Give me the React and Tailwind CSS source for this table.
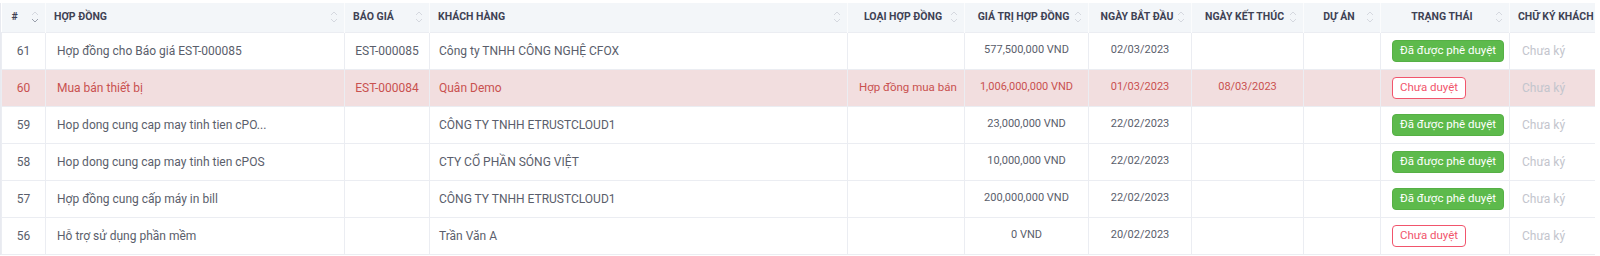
const COLS = [
  { key: 'no', label: '#', w: 44, head: 'left' },
  { key: 'name', label: 'Hợp đồng', w: 299, head: 'left' },
  { key: 'quote', label: 'Báo giá', w: 85, head: 'left' },
  { key: 'client', label: 'Khách hàng', w: 418, head: 'left' },
  { key: 'type', label: 'Loại hợp đồng', w: 117, head: 'center' },
  { key: 'value', label: 'Giá trị hợp đồng', w: 124, head: 'center' },
  { key: 'start', label: 'Ngày bắt đầu', w: 103, head: 'center' },
  { key: 'end', label: 'Ngày kết thúc', w: 112, head: 'center' },
  { key: 'project', label: 'Dự án', w: 77, head: 'center' },
  { key: 'status', label: 'Trạng thái', w: 129, head: 'center' },
  { key: 'sign', label: 'Chữ ký khách hàng', w: 130, head: 'left', noSort: true },
]

const ROWS = [
  { no: 61, name: 'Hợp đồng cho Báo giá EST-000085', quote: 'EST-000085', client: 'Công ty TNHH CÔNG NGHỆ CFOX', type: '', value: '577,500,000 VND', start: '02/03/2023', end: '', approved: true },
  { no: 60, name: 'Mua bán thiết bị', quote: 'EST-000084', client: 'Quân Demo', type: 'Hợp đồng mua bán', value: '1,006,000,000 VND', start: '01/03/2023', end: '08/03/2023', approved: false, danger: true },
  { no: 59, name: 'Hop dong cung cap may tinh tien cPO...', quote: '', client: 'CÔNG TY TNHH ETRUSTCLOUD1', type: '', value: '23,000,000 VND', start: '22/02/2023', end: '', approved: true },
  { no: 58, name: 'Hop dong cung cap may tinh tien cPOS', quote: '', client: 'CTY CỔ PHẦN SÓNG VIỆT', type: '', value: '10,000,000 VND', start: '22/02/2023', end: '', approved: true },
  { no: 57, name: 'Hợp đồng cung cấp máy in bill', quote: '', client: 'CÔNG TY TNHH ETRUSTCLOUD1', type: '', value: '200,000,000 VND', start: '22/02/2023', end: '', approved: true },
  { no: 56, name: 'Hỗ trợ sử dụng phần mềm', quote: '', client: 'Trần Văn A', type: '', value: '0 VND', start: '20/02/2023', end: '', approved: false },
]

function SortIcon({ active }) {
  return (
    <svg width="8" height="16" viewBox="0 0 8 16" fill="none" className="shrink-0">
      <path d="M1 6 L4 3 L7 6" stroke="#d5d8df" strokeWidth="1" />
      <path d="M1 10 L4 13 L7 10" stroke={active ? '#9aa0ac' : '#d5d8df'} strokeWidth="1" />
    </svg>
  )
}

function StatusBadge({ approved }) {
  if (approved) {
    return (
      <span className="inline-flex items-center h-[22px] px-[7px] rounded-[4px] bg-[#5dba4c] border border-[#56b045] text-white text-[11.5px]">
        Đã được phê duyệt
      </span>
    )
  }
  return (
    <span className="inline-flex items-center h-[22px] px-[7px] rounded-[4px] bg-white border border-[#f1556c] text-[#f1556c] text-[11.5px]">
      Chưa duyệt
    </span>
  )
}

export default function App() {
  return (
    <div className="bg-white w-[1600px] h-[256px] pt-[3px] font-['Roboto',sans-serif]">
      <div className="w-[1595px] overflow-hidden border-l border-[#e8eaf0]">
        <table className="table-fixed border-collapse w-[1638px]">
          <colgroup>
            {COLS.map(c => <col key={c.key} style={{ width: c.w }} />)}
          </colgroup>
          <thead>
            <tr className="bg-[#f3f6f9] h-[29px]">
              {COLS.map((c, i) => (
                <th key={c.key}
                  className={`p-0 font-bold text-[10.5px] uppercase text-[#3f4254] whitespace-nowrap border-r border-[#fbfcfd] ${i === 0 ? 'pl-[10px]' : 'pl-[8px]'} pr-[6px]`}>
                  <div className="flex items-center">
                    <span className={`flex-1 ${c.head === 'center' ? 'text-center' : 'text-left'}`}>{c.label}</span>
                    {!c.noSort && <SortIcon active={c.key === 'no'} />}
                  </div>
                </th>
              ))}
            </tr>
          </thead>
          <tbody>
            {ROWS.map(r => {
              const cell = `border border-[#ebedf2] text-[12px] whitespace-nowrap p-0 ${r.danger ? 'text-[#c9514f]' : 'text-[#5a5e6b]'}`
              return (
                <tr key={r.no} className={`h-[37px] ${r.danger ? 'bg-[#f2dedf]' : 'bg-white'}`}>
                  <td className={`${cell} text-center`}>{r.no}</td>
                  <td className={`${cell} pl-[11px]`}>{r.name}</td>
                  <td className={`${cell} text-center`}>{r.quote}</td>
                  <td className={`${cell} pl-[9px]`}>{r.client}</td>
                  <td className={`${cell} pl-[11px] !text-[11.5px]`}>{r.type}</td>
                  <td className={`${cell} text-center !text-[11px]`}>{r.value}</td>
                  <td className={`${cell} text-center !text-[11px]`}>{r.start}</td>
                  <td className={`${cell} text-center !text-[11px]`}>{r.end}</td>
                  <td className={cell}></td>
                  <td className={`${cell} pl-[11px]`}><StatusBadge approved={r.approved} /></td>
                  <td className={`${cell} pl-[12px] !text-[#c3c5cd]`}>Chưa ký</td>
                </tr>
              )
            })}
          </tbody>
        </table>
      </div>
    </div>
  )
}
